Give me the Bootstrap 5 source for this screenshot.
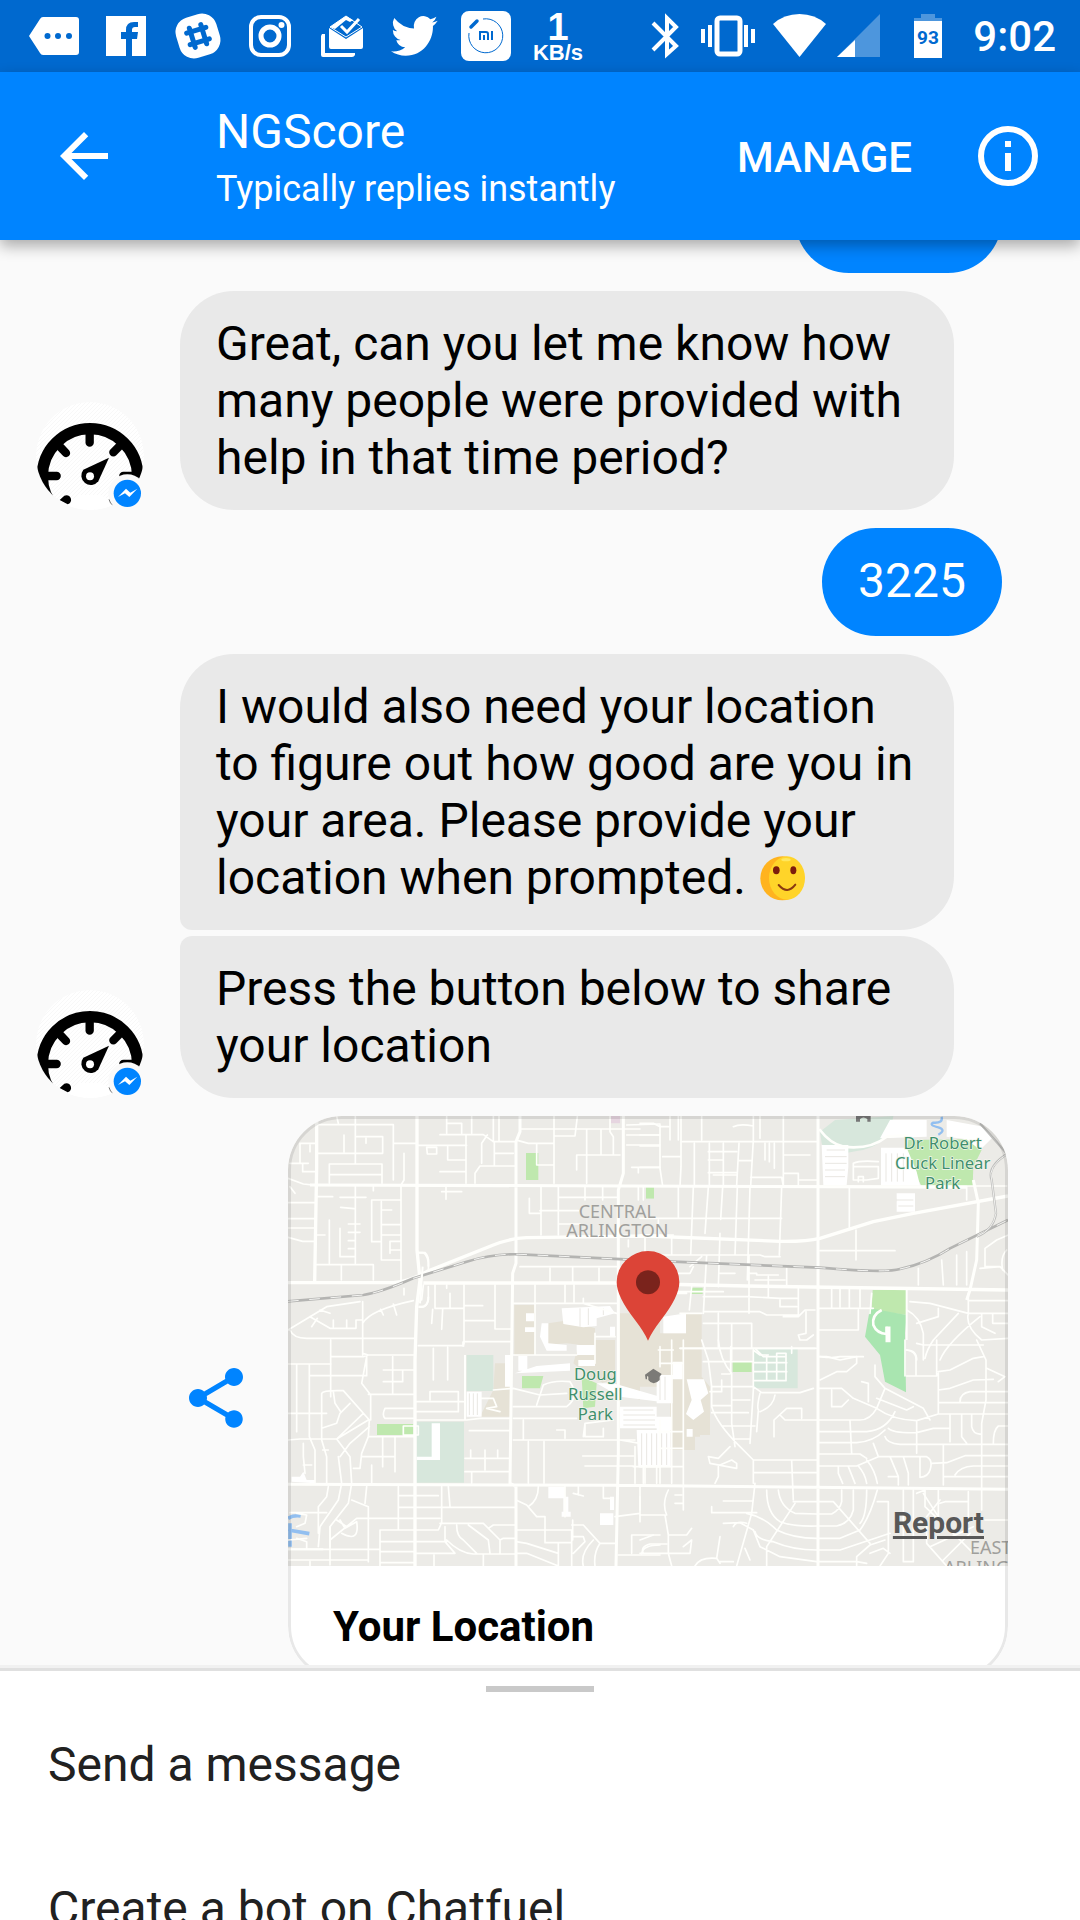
<!DOCTYPE html>
<html lang="en">
<head>
<meta charset="utf-8">
<meta name="viewport" content="width=device-width, initial-scale=1">
<title>NGScore</title>
<link rel="stylesheet" href="https://cdn.jsdelivr.net/npm/bootstrap@5.3.0/dist/css/bootstrap.min.css">
<script src="https://cdn.jsdelivr.net/npm/bootstrap@5.3.0/dist/js/bootstrap.bundle.min.js"></script>
<style>
  :root { --brand: #0084ff; --brand-dark: #0069cf; --page: #fafafa; --bubble: #e9e9e9; }
  body { background: var(--page); font-family: Roboto, "Liberation Sans", sans-serif; font-size: 48px; line-height: 57px; color: #000; }
  .status-bar { background: var(--brand-dark); color: #fff; height: 72px; padding: 0 24px 0 18px; }
  .status-bar svg { flex: none; fill: #fff; }
  .net-speed { width: 72px; font-family: "Liberation Sans", sans-serif; font-weight: 700; font-size: 22px; line-height: 22px; padding-top: 4px; }
  .net-speed b { font-size: 38px; line-height: 30px; }
  .clock { font-size: 42px; font-weight: 500; margin-left: 11px; }
  .app-bar { background: var(--brand); color: #fff; min-height: 168px; padding: 0 42px 0 48px; z-index: 2; box-shadow: 0 6px 14px rgba(0,0,0,.32); }
  .plain-btn { background: none; border: 0; padding: 0; color: inherit; line-height: 1; }
  .chat-title { font-size: 48px; line-height: 56px; font-weight: 400; margin: 0 0 8px; }
  .chat-sub { font-size: 36px; line-height: 42px; margin: 0; }
  .head-text { margin-left: 96px; padding-top: 2px; }
  .manage { font-size: 42px; font-weight: 500; padding-top: 3px; margin-right: 66px; }
  .chat-pane { min-height: 0; }
  .thread { gap: 18px; margin-top: -75px; }
  .bot-row { gap: 36px; padding-left: 36px; }
  .bot-row > svg { flex: none; overflow: visible; }
  .stack { gap: 6px; }
  .bubble { background: var(--bubble); border-radius: 54px; padding: 24px 36px; max-width: 774px; min-height: 108px; }
  .bubble-mine { background: var(--brand); color: #fff; margin-right: 78px; }
  .bubble-past { width: 207px; }
  .joined-below { border-bottom-left-radius: 12px; }
  .joined-above { border-top-left-radius: 12px; }
  .emoji { vertical-align: -7px; margin-left: 2px; }
  .share-row { gap: 36px; padding: 0 72px 0 180px; }
  .place { background: #fff; border-radius: 54px; min-height: 564px; overflow: hidden; }
  .place::after { content: ""; position: absolute; inset: 0; border: 3px solid rgba(0,0,0,.09); border-radius: 54px; pointer-events: none; }
  .place-map { display: block; width: 100%; height: 450px; }
  .place-title { font-size: 42px; line-height: 48px; font-weight: 700; margin: 0; padding: 37px 45px 29px; }
  .report { right: 24px; top: 389px; font-size: 30px; line-height: 36px; font-weight: 700; color: #585858; text-underline-offset: 3px; }
  .sheet { background: #fff; height: 249px; color: #212121; z-index: 1; box-shadow: 0 -3px 0 #e0e0e0, 0 -6px 0 #f1f1f1; }
  .grip { width: 108px; height: 6px; background: #c9c9c9; margin: 15px auto 1px; }
  .sheet-item { display: block; width: 100%; text-align: left; font-size: 48px; line-height: 60px; padding: 42px 48px; color: inherit; }
  .label-area { font: 54px "Noto Sans", sans-serif; fill: #a09f9c; }
  .label-park { font: 50px "Noto Sans", sans-serif; fill: #3f8f6c; stroke: #f4f6ee; stroke-width: 4px; paint-order: stroke; }
</style>
</head>
<body class="d-flex flex-column vh-100 overflow-hidden">

<svg width="0" height="0" class="position-absolute" aria-hidden="true">
  <defs>
    <clipPath id="face"><circle cx="270" cy="228" r="162"/></clipPath>
    <pattern id="hatch" width="12" height="12" patternUnits="userSpaceOnUse"><rect width="12" height="12" fill="#fff"/><path d="M-3 3L3-3M0 12L12 0M9 15L15 9" stroke="#f4f4f4" stroke-width="2"/></pattern>
    <symbol id="gauge" viewBox="108 66 324 324" overflow="visible">
      <g clip-path="url(#face)">
        <circle cx="270" cy="228" r="162" fill="url(#hatch)"/>
        <circle cx="270" cy="289" r="143" fill="none" stroke="#000" stroke-width="34"/>
        <path d="M186 376L240 345 300 345 370 376 330 440H180z" fill="#fff"/>
        <path d="M269 150V188M182 202L198 219M357 200L340 217M140 288H170M400 288H370" stroke="#000" stroke-width="25" stroke-linecap="round"/>
        <path d="M179 360L193 347A14 14 0 1 1 203 373z"/>
        <path d="M327 233L295 304A28 28 0 1 1 250 269z"/>
        <circle cx="270" cy="289" r="12" fill="#fff"/>
      </g>
      <circle cx="382" cy="340" r="57" fill="#fafafa"/>
      <circle cx="382" cy="340" r="41" fill="#0084ff"/>
      <path d="M354 351L378 326 391 338 412 326 388 351 375 340z" fill="#fff"/>
      <path d="M327 358L332 370 337 374" fill="none" stroke="#333" stroke-width="2"/>
    </symbol>
  </defs>
</svg>

<div class="status-bar d-flex align-items-center flex-shrink-0">
  <svg width="72" height="72" viewBox="18 0 72 72"><path d="M43 17H76Q79 17 79 20V52Q79 55 76 55H43Q41 55 40 53L29 36 40 19Q41 17 43 17z"/><g fill="#0069cf"><circle cx="47.500" cy="36" r="3"/><circle cx="58" cy="36" r="3"/><circle cx="69" cy="36" r="3"/></g></svg>
  <svg width="72" height="72" viewBox="90 0 72 72"><path d="M106 16H146V56H106z"/><path d="M126 56V39H121V32H126V30Q126 22 134 22H138V27H135Q132 27 132 30V32H138L137 39H132V56z" fill="#0069cf"/></svg>
  <svg width="72" height="72" viewBox="162 0 72 72"><g transform="rotate(-17 198 36)"><rect x="177" y="15" width="42" height="42" rx="15"/><path d="M192 26V46M204 26V46M188 30H208M188 42H208" stroke="#0069cf" stroke-width="5" stroke-linecap="round"/></g></svg>
  <svg width="72" height="72" viewBox="234 0 72 72"><g fill="none" stroke="#fff"><rect x="251" y="17" width="38" height="38" rx="10" stroke-width="4"/><circle cx="270" cy="36" r="9" stroke-width="5"/></g><circle cx="281.500" cy="25" r="3"/></svg>
  <svg width="72" height="72" viewBox="306 0 72 72"><path d="M322 34H325V53H355V55Q354 57 352 57H323Q321 57 321 55V36z"/><path d="M329 28L346 39 363 28V47Q363 49 361 49H331Q329 49 329 47z"/><path d="M346 16L330 27 346 37 362 27z" fill="none" stroke="#fff"/><path d="M346 16L330 27 335 29 346 20 350 22 353 20z"/><path d="M341 26L347 32 359 19" fill="none" stroke="#fff" stroke-width="3"/></svg>
  <svg width="72" height="72" viewBox="378 0 72 72"><path transform="translate(391 10) scale(2.920 3.050)" d="M5.026 15c6.038 0 9.341-5.003 9.341-9.334 0-.14 0-.282-.006-.422A6.685 6.685 0 0 0 16 3.542a6.658 6.658 0 0 1-1.889.518 3.301 3.301 0 0 0 1.447-1.817 6.533 6.533 0 0 1-2.087.793A3.286 3.286 0 0 0 7.875 6.030a9.325 9.325 0 0 1-6.767-3.429 3.289 3.289 0 0 0 1.018 4.382A3.323 3.323 0 0 1 .64 6.575v.045a3.288 3.288 0 0 0 2.632 3.218 3.203 3.203 0 0 1-.865.115 3.230 3.230 0 0 1-.614-.057 3.283 3.283 0 0 0 3.067 2.277A6.588 6.588 0 0 1 .78 13.580a6.320 6.320 0 0 1-.78-.045A9.344 9.344 0 0 0 5.026 15z"/></svg>
  <svg width="72" height="72" viewBox="450 0 72 72"><rect x="461" y="11" width="50" height="50" rx="8"/><path d="M483 19A17 17 0 1 1 469 33" fill="none" stroke="#0069cf"/><path d="M471 27L477 21" stroke="#0069cf" stroke-width="3.500" stroke-linecap="round"/><path d="M480 40V32H486Q488 32 488 34V40M484 35V40M492 31V40" fill="none" stroke="#0069cf" stroke-width="2"/></svg>
  <div class="net-speed d-flex flex-column align-items-center"><b>1</b><span>KB/s</span></div>
  <svg class="ms-auto" width="66" height="72" viewBox="632 0 66 72"><path d="M653 23L676 46 667 54V18L676 27 653 50" fill="none" stroke="#fff" stroke-width="4"/></svg>
  <svg width="60" height="72" viewBox="698 0 60 72"><rect x="717" y="18" width="23" height="36" rx="3" fill="none" stroke="#fff" stroke-width="5"/><path d="M701 29h4v14h-4zM708 25h4v22h-4zM744 25h4v22h-4zM751 29h4v14h-4z"/></svg>
  <svg width="74" height="72" viewBox="758 0 74 72"><path d="M773 24Q784 14 799.500 14T826 24L799.500 57z"/></svg>
  <svg width="58" height="72" viewBox="832 0 58 72"><path d="M837 57L880 14V57z" opacity=".3"/><path d="M837 57L855 40V57z"/></svg>
  <svg width="72" height="72" viewBox="890 0 72 72"><path d="M921 14H935V18H942V21H914V18H921z" opacity=".3"/><path d="M914 21H942V58H914z"/><text x="928" y="44" text-anchor="middle" font-size="19" font-weight="700" fill="#0069cf">93</text></svg>
  <span class="clock">9:02</span>
</div>

<header class="app-bar d-flex align-items-center position-relative flex-shrink-0">
  <button class="plain-btn" type="button" aria-label="Back"><svg width="72" height="72" viewBox="0 0 24 24" fill="#fff" class="d-block"><path d="M20 11H7.830l5.590-5.590L12 4l-8 8 8 8 1.410-1.410L7.830 13H20v-2z"/></svg></button>
  <div class="head-text flex-grow-1">
    <h1 class="chat-title">NGScore</h1>
    <p class="chat-sub">Typically replies instantly</p>
  </div>
  <button class="plain-btn manage" type="button">MANAGE</button>
  <button class="plain-btn" type="button" aria-label="Info"><svg width="60" height="60" viewBox="0 0 60 60" class="d-block" fill="#fff"><circle cx="30" cy="30" r="27" fill="none" stroke="#fff" stroke-width="6"/><path d="M27 15h6v6h-6zM27 27h6v18h-6z"/></svg></button>
</header>

<main class="chat-pane flex-grow-1 overflow-hidden">
  <div class="thread d-flex flex-column">
    <div class="bubble bubble-mine bubble-past align-self-end"></div>

    <div class="bot-row d-flex align-items-end">
      <svg width="108" height="108" role="img" aria-label="NGScore"><use href="#gauge"/></svg>
      <div class="bubble">Great, can you let me know how many people were provided with help in that time period?</div>
    </div>

    <div class="bubble bubble-mine align-self-end">3225</div>

    <div class="bot-row d-flex align-items-end">
      <svg width="108" height="108" role="img" aria-label="NGScore"><use href="#gauge"/></svg>
      <div class="stack d-flex flex-column">
        <div class="bubble joined-below">I would also need your location to figure out how good are you in your area. Please provide your location when prompted. <svg class="emoji" width="45" height="45" viewBox="0 0 135 135" role="img" aria-label="smile"><circle cx="67" cy="67" r="66" fill="#ffb31f"/><ellipse cx="81" cy="66" rx="54" ry="65" fill="#ffd429"/><ellipse cx="78" cy="11" rx="14" ry="5" fill="#ffe75e"/><ellipse cx="49" cy="43" rx="10" ry="12" fill="#7d1c0c"/><ellipse cx="100" cy="43" rx="9" ry="12" fill="#7d1c0c"/><path d="M56 87Q82 117 106 86" fill="none" stroke="#8a3a10" stroke-width="6" stroke-linecap="round"/></svg></div>
        <div class="bubble joined-above">Press the button below to share your location</div>
      </div>
    </div>

    <div class="share-row d-flex align-items-center">
      <button class="plain-btn" type="button" aria-label="Share"><svg width="72" height="72" viewBox="0 0 24 24" fill="#0084ff" class="d-block"><path d="M18 16.080c-.76 0-1.440.3-1.960.77L8.910 12.700c.05-.23.09-.46.09-.7s-.04-.47-.09-.7l7.050-4.110c.54.5 1.250.81 2.040.81 1.660 0 3-1.340 3-3s-1.340-3-3-3-3 1.340-3 3c0 .24.04.47.09.7L8.040 9.810C7.500 9.310 6.790 9 6 9c-1.660 0-3 1.340-3 3s1.340 3 3 3c.79 0 1.500-.31 2.040-.81l7.120 4.160c-.05.21-.08.43-.08.65 0 1.610 1.310 2.920 2.920 2.920 1.610 0 2.920-1.310 2.920-2.920s-1.310-2.920-2.920-2.920z"/></svg></button>
      <article class="place position-relative flex-grow-1">
        <svg class="place-map" viewBox="24 48 2160 1350" preserveAspectRatio="xMidYMid slice" role="img" aria-label="Map of Central Arlington">
          <rect x="24" y="48" width="2160" height="1350" fill="#ecebe7"/>
          <!-- campus, schools, parks and water -->
          <g fill="#e6e2d6">
            <path d="M703 615H765V765H703zM805 670L870 660 945 685V740L860 730 800 735zM1020 640H1140V860H1020zM1140 700H1260V1010L1330 1010H1245V1050H1170V900H1140zM645 790H690V950H600L640 870z"/>
            <path d="M1218 640H1265V830L1290 860V1005H1250L1170 1000V830H1218zM900 720H1005V840L960 850 940 850H1080V900L930 830 880 790z"/>
          </g>
          <g fill="#d7e7dc"><path d="M560 765H640V873H560zM410 965H552V1148H410zM1422 745H1553V865H1422z"/><path d="M1620 95L1665 60 1840 48Q1830 140 1730 153L1640 170 1625 130z"/></g>
          <g fill="#bfe8ae"><path d="M738 159H775V240H738zM1098 262H1122V296H1098zM726 828H790L780 865H726zM905 830L950 850 945 920 910 925zM291 972H400V1005H291zM1232 563H1268V582H1232zM1358 786H1415V816H1358zM1885 120L2060 118 2105 150 2080 200 2078 258H1925L1900 215 1875 200z"/><path d="M1778 570H1880V645L1775 630z"/></g>
          <path d="M1770 625L1880 645 1875 700 1878 877 1815 845 1800 765 1755 710z" fill="#a9e5b0"/>
          <path d="M1805 630Q1775 645 1780 675 1790 700 1820 702V680" fill="none" stroke="#fffffc" stroke-width="8"/><path d="M1819 682h10v42h-10z" fill="#fffffc" stroke="#fffffc" stroke-width="5"/>
          <path d="M993 48h27v22h-27z" fill="#e6d5e0"/>
          <g fill="none" stroke="#92bff0" stroke-width="7"><path d="M24 1255Q40 1245 62 1248M24 1290L88 1301M30 1270V1340" stroke-width="11"/><path d="M1985 50Q1990 70 1960 68 1945 75 1975 82 2000 90 1975 104" /></g>
          <!-- open lots and parking -->
          <g fill="#fff">
            <path d="M845 625L990 618 1005 640 950 655V678L910 682 850 672zM785 670H805V730L860 735V752H800L780 710zM890 735H945V765H890zM990 680h15v30h-15zM738 640h24v24h-24zM735 682h30v14h-30zM560 875H605V950H560zM675 765H692V860H675zM770 798L870 790V812L705 820zM895 780H945V798H895zM715 768H742V812H715zM950 850H1000L1140 890V905L1020 890z"/>
            <path d="M1020 920H1130V985H1020zM1070 990H1172V1102H1075zM1130 825H1178V910H1130zM1130 950H1175V990H1130zM1220 838H1272L1285 880 1262 900 1272 935 1240 960 1218 942 1235 900zM1178 785H1208V838H1178zM1150 650L1218 640V700H1150zM1220 987H1238V1010H1220zM35 1145V1130H60L70 1115 80 1140H105V1150z"/>
            <path d="M1625 135H1705V200L1700 255H1630zM1803 143H1880L1910 215 1920 256H1803zM1850 280H1905V335H1850zM1830 60H1940V110L1800 115zM2000 60L2110 80 2140 110 2100 150 2060 118 2000 110zM805 1160H855V1195H805zM455 970H480V1080H410V1070H455zM850 1190H865V1235H872V1250H845V1235H850zM960 1240H1000V1275H960zM990 1190h12v40h-12z"/>
          </g>
          <g stroke="#e9e7e2" stroke-width="3"><path d="M568 880V945M580 880V945M592 880V945M1030 930H1120M1030 945H1125M1030 960H1125M1030 975H1125M1085 1000V1095M1100 1000V1095M1115 1000V1095M1130 1000V1095M1145 1000V1095M1160 1000V1095M1140 830V900M1155 830V900M1640 150H1695M1635 170H1700M1635 190H1700M1635 210H1695M1635 230H1695M865 300H1900M1855 318H1900M1818 160V245M1835 160V245M1852 160V245M1870 160V245M900 625V680M925 625V675M970 625V645" stroke-dasharray="none" fill="none"/></g>
          <path d="M860 296H1850V304H860z" fill="#ecebe7"/>
          <!-- small streets, top left -->
          <g fill="none" stroke="#fffffc" stroke-width="5" stroke-linejoin="round" stroke-linecap="round">
            <path d="M110 74H340V240M170 48L175 70M226 50V190M110 160H308V110H230M258 115V130M192 105V155M148 192H306V250M148 192V250M150 224H306M340 130H408M372 160V240L363 255V545M60 130H105M60 130V190H30M90 135V155M30 190H85M68 190V215H105M24 235L70 252 110 256M24 308H104M24 356H104M24 384H104M24 412L68 424H104M30 260L45 280M110 290H158M110 405H135M180 292H258M226 260V490M148 360V490M110 494H280V540M184 494V540M180 385V470H226M205 372H240M205 397H240M205 422H226M205 446H226M182 322L222 326M275 300H363M275 300V425H304M304 305V480H363M306 330H335M306 374H363M306 405H360M360 424H330V460M330 450H360M280 260V272"/>
            <path d="M415 136H560M440 142H470V162H442zM503 140V180H555M480 215H555M558 105V250M480 104H610L640 125H705M500 50V100M500 70H545V100M575 48V100M622 105L605 130V190M640 48V125M657 48V125M643 125V195M643 160H700M585 250V220L600 198H708M720 87H1080M822 50V250M715 122L745 130H820M770 130V195H820M825 108H885L892 50M890 165H1020M890 165V210M920 90V250M963 90V165M990 50V95L1000 110V165M1040 75L1140 72M1040 105H1140M1040 135H1140M1055 202H1140M1075 202V218M485 275H545M498 262V298M783 260V405M748 295V340H780M780 332H895M835 260V405M835 292H1010M835 372H900M915 260V300M968 260V300M1075 262V300M1090 262V300M1045 420V440M1095 415V470"/>
            <path d="M720 500H1010M810 505V545M878 500V545M957 505V545M410 458H430Q448 470 445 510M445 560V600Q440 625 420 620M430 555L425 600M372 565V585M24 690L90 650 140 620 240 605M30 690Q40 715 80 715H408M90 650L150 685H228V660H245M95 680L112 655M120 630L150 640M160 660V680M200 660V685M248 605V765M248 670Q270 630 400 602M302 628L310 645M340 612L350 645M152 720V890M155 770H250L265 765M248 760L265 765H400M500 555V565M465 555V625M465 625H550M455 670L458 628M488 628L485 688M510 580V625M552 555V732M552 617H608M555 662H645M645 555V687H697M552 725H697M415 737H550V725M460 745V840M503 742V840M765 555V765M698 610H1010M855 555V605M882 555V605M910 595V610L1010 640M700 765H890M945 700V790M945 710H1005"/>
          </g>
          <!-- small streets, top right -->
          <g transform="translate(1080 0)" fill="none" stroke="#fffffc" stroke-width="5" stroke-linejoin="round" stroke-linecap="round">
            <path d="M0 70H40L60 80H85M90 50V120M115 48V120M60 75V205L68 258M68 170H120M0 105H60M0 138H60M0 202H60M123 48V200L120 258M128 125H530M185 48V120M205 155H290M205 180H250M205 218H290M220 225H290M163 130V255M208 130V255M250 130V255M297 130L290 255M297 182H335M280 80Q300 70 340 78M340 48V120L332 258M332 232H425L430 258M360 48V115M375 130V180M388 130V185M403 130V205M430 48V258M430 165H510M430 220H475V255M475 240H530M0 258H1100M115 260V355M160 262L152 465M205 262L195 400M248 262L242 358M292 262L285 465M330 262L322 540M425 262L418 465M0 355H425M55 360V405M0 405H100M0 465H360L375 470H420M95 410V465M200 465L190 640M240 400L235 560M327 465V640M150 500L185 470M100 520H150L160 500M240 520H285M330 520H350V525H415M440 505V555M345 540H435M385 530V590M60 575H250M190 590H320L420 595H475M60 580H140M155 560L148 630M120 640H185M190 635H360L380 645H475V565M420 600V620H470M430 650H475L495 630H525M498 635V700L475 705 480 720H500L520 705M190 670H335V745M235 640V740M275 670V780M120 745H525M60 740V800M345 745L370 770H435M455 740V760M350 745H480"/>
            <path d="M628 262V385M540 452H765M648 390V480M535 625H700M575 565V625M628 565V625M535 690H655V630M660 565V620M600 565V620M540 770Q580 775 600 770H670M640 240H680L715 235V200H640zM640 240V190Q660 180 715 185M655 245V230H670V245M1105 405L1070 420 1035 445V500H1080M1100 450Q1080 470 1088 510M980 260V300M835 505V555M905 480L910 555M950 465V555M980 455V555M1020 505L1080 500 1104 525M810 605L870 610 985 640H1104M800 630Q840 650 850 700V780M895 625V650L830 670M955 640L880 720Q860 750 855 775M985 580V640Q975 680 1025 720L1104 715M1025 640V680L1065 700M1058 640V670H1104M985 602H1104M1020 650Q920 730 900 780M800 750Q830 750 830 780M695 580L690 640"/>
            <path d="M540 90Q570 130 610 140 690 150 740 110L800 105" stroke-width="8"/>
          </g>
          <!-- small streets, bottom left -->
          <g transform="translate(0 720)" fill="none" stroke="#fffffc" stroke-width="5" stroke-linejoin="round" stroke-linecap="round">
            <path d="M24 72H152M50 75V275M88 75V290L105 330V430M88 107H260V50M24 220H140M24 300L60 297H170L265 240M125 300V160Q130 150 190 152L268 240 265 290H400M125 300L140 350V430M128 330H145M160 155L165 190 182 215M210 190L180 220 170 250 125 265M250 220L170 297M180 350L210 310 268 260M170 297L210 350 215 430 205 490 150 560V620M175 350L185 430 175 480 120 560 115 620M260 50L245 130 272 165V240M265 163H400M310 90H400M338 50V160M368 90V125H310M70 310V350L75 400M70 375H95M265 290L245 340 240 385H220M245 350H345M308 292V380M345 292V395M275 375V430M315 205H400M315 205Q305 225 315 235H400M370 258H415V285H370z"/>
            <path d="M410 185H550M450 180V155H535V215H410M408 240H560L600 235H690M568 272H690M555 355H690M572 330V355M615 330V390M653 330V350M555 395H690M575 398V430M640 150L700 145M600 175H640L650 200 620 205 660 215M700 145L780 165 860 160M770 195L790 135Q820 120 870 125 900 170 860 200H700M730 240V300M700 235H890M700 300H1065M745 305V430M792 305V430M908 348H1060M915 378H1060M830 270H855V295M915 250V290H970V265M910 290L915 250 1000 240M1065 320V430M1090 385V430M1020 300L1080 310M1060 380H1140M1140 240V430"/>
            <path d="M145 440L140 470 115 500V580M24 600L80 595M215 480L265 500V665M260 440L255 490M30 518H140M170 540L200 560M150 600L230 535H480M180 540L195 565 230 545Q240 610 185 580M50 520L80 525 75 550 50 560M50 595L80 605V625M24 660H265M24 628H300M150 560V675M90 665V678M355 440V570M300 678V570H475L485 548V440M355 467H475M355 502H705M505 440L510 500M300 605H500M300 635H400M300 668H400M408 640H525L495 605V560M480 550H610L660 600V640M530 555Q530 590 550 600L590 640M565 555L625 600 630 640M500 600Q540 640 580 642H708M462 645V678M610 645V678M408 605H490M625 565L640 555H705M660 600L670 595H705M708 480L740 495 770 530H795V605M775 440Q775 480 745 500M708 570H875V678M795 608H875M708 605L740 610 835 640V678M835 610V678M740 640L835 678M875 555H910L960 610H1005M878 540V600M880 590H910L915 605 880 640M940 600Q900 640 910 678M960 610Q940 640 945 678M855 440V530M895 440V465M880 460L910 468M970 440V475H1000M1005 530L1080 520M1080 440V545M1140 585H1055V640M1140 615Q1090 615 1085 640M1015 645H1140M708 640H740"/>
          </g>
          <!-- small streets, bottom right -->
          <g transform="translate(1080 720)" fill="none" stroke="#fffffc" stroke-width="5" stroke-linejoin="round" stroke-linecap="round">
            <path d="M120 25H530M185 0L205 60 215 140V200Q230 250 300 320L340 360V430M235 0Q240 60 275 100V250L285 320M272 20V100M190 65H340M340 30L360 45H385M340 68H440M340 95H440M380 45V120M410 40V120M410 40H438V122H340M215 140H340M245 120V155H210M245 102H270M215 197H275M215 218H325M245 258H345M275 180H330M285 297H330M340 30V150L330 310M340 140L365 158H480L520 145M360 160Q350 200 355 210L350 275M405 165Q400 200 360 215M402 290V240L440 205H485V235M420 225L435 240H530M95 0V430M130 0V510M55 30H100M60 70H130M0 380H130M50 380V430M15 385V430M55 275H130M55 325H130M270 320L235 355 205 350 210 370 290 385V370L275 360 240 375M235 380V410L225 430M340 360H530M340 398H530M455 362L460 480M345 430L335 520 290 678M0 525H75L85 585H140L155 565M85 450Q65 490 80 525M0 470V510M105 465H125M105 490H130M0 640H150L155 600 130 620M85 585V640L95 678M0 600L40 585M10 640Q0 620 30 612H80M165 678Q180 650 230 655L240 590M230 655L240 670M250 483H340M215 500V518H350M250 550L300 548 340 570M280 560Q290 540 320 550M240 665H280M315 625L330 660"/>
            <path d="M535 50H560L600 60 650 50V70L620 95H590L540 120M535 145H605L640 175 710 205Q760 240 830 242L895 222H1104M575 150V200H605L625 180M665 125L685 130V185M705 75V110L735 145 850 205 870 240M735 145L710 205Q690 240 660 240H535M710 175L800 210 820 200M765 215Q740 270 680 275H535M735 270Q700 305 650 308H535M630 242L635 340M535 342H660L680 355M535 378H650L715 350H860Q880 360 870 390 865 410 840 412V350M595 380V400L608 430M625 380L645 430M655 378Q675 400 680 430M680 360Q705 390 712 430M700 310L715 350M735 290Q740 310 780 313H1104M745 265Q760 280 830 278L880 265H930M830 245V340M750 350L775 410V435M790 350L805 400V435M745 410H775M875 370L920 368 975 347H1104M910 315V435M945 405Q960 380 1000 378H1104M910 410H1104M895 150L930 145 1000 120 1060 118M895 188H1104M895 95L930 90 1000 55 1030 50M895 100V222M800 108H890V0M795 0V108M800 30Q830 35 828 60V105M830 10L850 15H1030M1010 0L1038 60V180L1025 250V510M1040 85L1095 110 1075 125M960 185Q960 160 990 155H1104M930 225V305M965 225V290L980 310M995 225V260Q1000 285 1025 282M1104 258H1075Q1060 270 1060 310M985 455V550M895 450V530L850 460M900 490L915 485H985"/>
            <path d="M380 450Q380 520 420 545 460 560 530 558H590Q630 550 640 510V450M415 450Q420 500 465 520L530 522H575Q600 510 605 485V450M460 485H580L690 610M345 575Q350 600 400 605 460 630 530 630H600L750 580M320 520Q370 530 410 570 460 595 530 595H600L660 570Q690 530 712 450M680 450Q680 530 660 550M465 490L380 620V678M340 570L360 620 420 650 530 665H650L680 670M712 485H745V640L720 678M650 678V650L690 615 735 600M690 640L730 625 750 640M790 450V665H820V450M830 460L855 450V500L960 600 1000 640M860 560V610L920 678M900 480L860 530M870 620L1000 560M1035 540H1104M990 580L910 660"/>
          </g>
          <!-- main roads -->
          <g fill="none" stroke="#fffffc" stroke-width="9" stroke-linejoin="round">
            <path d="M411 48V450L420 540 410 620 405 780V1398M110 48V200L104 545M24 548H340Q385 545 440 515L640 435Q690 415 740 413L1100 408 1500 424Q1580 425 1620 415L1780 365 1900 340 2184 288M430 549H1000L1400 558 2184 570" stroke-width="10"/>
            <path d="M1030 48V220L1015 270V1060L1008 1398M720 48V95L708 125V490L698 520 690 1150 708 1160V1398M1614 48V1398M90 255L1050 258 2060 262M24 1153L1010 1156 2184 1168M2080 240L2095 310 2090 480 2070 570 2060 600"/>
            <path d="M555 765V960M1880 570V720M550 740V725M24 1348H130" stroke-width="6"/>
          </g>
          <!-- railway -->
          <g fill="none"><path d="M24 604L250 585Q300 578 400 535L560 485Q640 460 720 463L1180 485 1620 503Q1820 520 1860 507 1940 490 2010 445L2184 360" stroke="#b4b4b2" stroke-width="8"/><path d="M24 604L250 585Q300 578 400 535L560 485Q640 460 720 463L1180 485 1620 503Q1820 520 1860 507 1940 490 2010 445L2184 360" stroke="#f5f5f3" stroke-width="3" stroke-dasharray="32 32"/>
            <path d="M2184 160Q2120 200 2135 240L2148 340Q2140 390 2090 410M2100 70L2184 165" stroke="#bdbdbb" stroke-width="7"/><path d="M2184 160Q2120 200 2135 240L2148 340Q2140 390 2090 410" stroke="#f0f0ee" stroke-width="3"/></g>
          <path d="M408 458H435Q448 470 445 500M428 500L420 610M445 590Q445 625 415 620" fill="none" stroke="#fffffc" stroke-width="6"/>
          <path d="M1728 48H1772V65H1762V57Q1750 48 1740 57V65H1728z" fill="#777"/>
          <path d="M1095 824L1120 806 1145 822 1139 830V840Q1120 860 1105 840V830L1101 828V838H1097z" fill="#7b7a77"/>
          <g text-anchor="middle">
            <g class="label-area"><text x="1012" y="353">CENTRAL</text><text x="1012" y="411">ARLINGTON</text></g>
            <g class="label-park"><text x="1988" y="147">Dr. Robert</text><text x="1988" y="207">Cluck Linear</text><text x="1988" y="267">Park</text><text x="946" y="841">Doug</text><text x="946" y="901">Russell</text><text x="946" y="961">Park</text></g>
          </g>
          <g class="label-area"><text x="2070" y="1363">EAST</text><text x="1992" y="1421">ARLINGTON</text></g>
          <path d="M1104 722Q1092 695 1065 660 1010 590 1010 547A94 94 0 0 1 1198 547Q1198 590 1143 660 1116 695 1104 722z" fill="#dc4437"/>
          <circle cx="1104" cy="547" r="36" fill="#7a231c"/>
        </svg>
        <a class="report position-absolute" href="#report">Report</a>
        <h2 class="place-title">Your Location</h2>
      </article>
    </div>
  </div>
</main>

<section class="sheet position-relative flex-shrink-0">
  <div class="grip"></div>
  <button class="plain-btn sheet-item" type="button">Send a message</button>
  <button class="plain-btn sheet-item" type="button">Create a bot on Chatfuel</button>
</section>

</body>
</html>
